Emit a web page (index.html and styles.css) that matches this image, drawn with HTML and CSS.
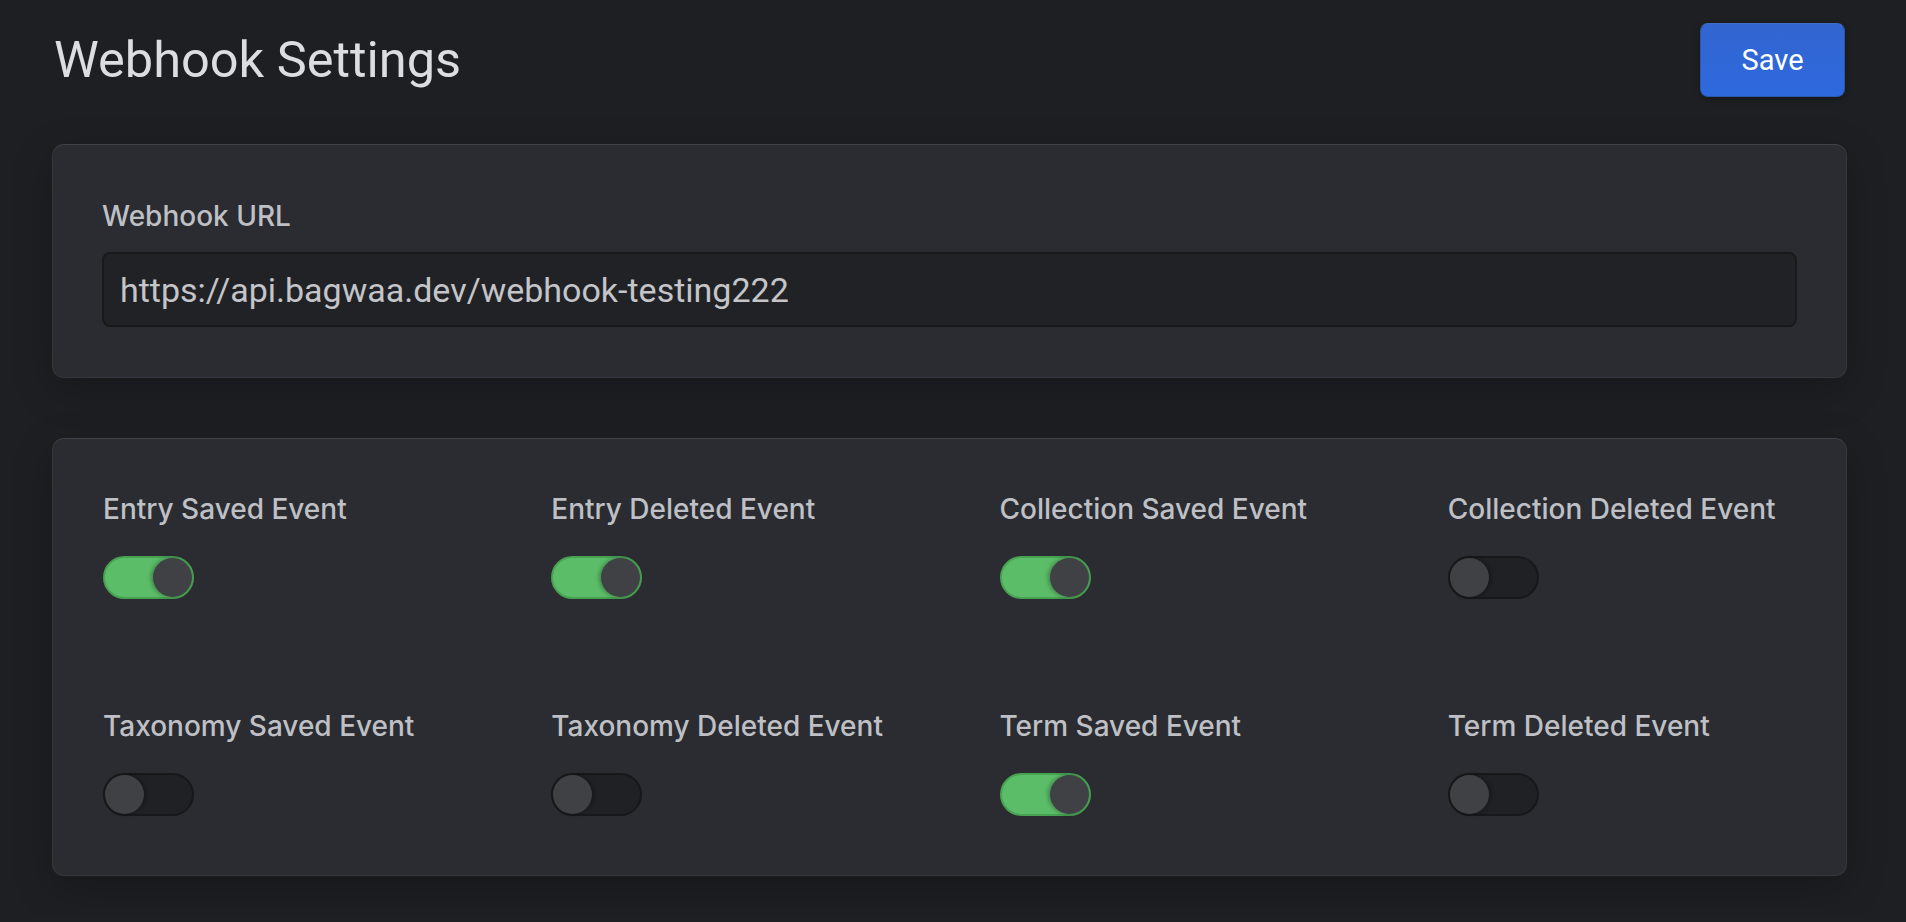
FILE: index.html
```html
<!DOCTYPE html>
<html lang="en">
<head>
<meta charset="utf-8">
<title>Webhook Settings</title>
<link rel="stylesheet" href="styles.css">
</head>
<body>
<div class="page">
  <header class="header">
    <h1 class="title">Webhook Settings</h1>
    <button class="save-btn" type="button">Save</button>
  </header>

  <section class="card card-url">
    <label class="label url-label" for="url">Webhook URL</label>
    <input class="url-input" id="url" type="text" value="https://api.bagwaa.dev/webhook-testing222" readonly>
  </section>

  <section class="card card-events">
    <div class="event">
      <div class="label">Entry Saved Event</div>
      <div class="toggle on"><span class="knob"></span></div>
    </div>
    <div class="event">
      <div class="label">Entry Deleted Event</div>
      <div class="toggle on"><span class="knob"></span></div>
    </div>
    <div class="event">
      <div class="label">Collection Saved Event</div>
      <div class="toggle on"><span class="knob"></span></div>
    </div>
    <div class="event">
      <div class="label">Collection Deleted Event</div>
      <div class="toggle"><span class="knob"></span></div>
    </div>
    <div class="event">
      <div class="label">Taxonomy Saved Event</div>
      <div class="toggle"><span class="knob"></span></div>
    </div>
    <div class="event">
      <div class="label">Taxonomy Deleted Event</div>
      <div class="toggle"><span class="knob"></span></div>
    </div>
    <div class="event">
      <div class="label">Term Saved Event</div>
      <div class="toggle on"><span class="knob"></span></div>
    </div>
    <div class="event">
      <div class="label">Term Deleted Event</div>
      <div class="toggle"><span class="knob"></span></div>
    </div>
  </section>
</div>
</body>
</html>
```

FILE: styles.css
```css
* {
  box-sizing: border-box;
}

html, body {
  margin: 0;
  padding: 0;
  background: #1e1f22;
}

body {
  font-family: Roboto, "Liberation Sans", Arial, sans-serif;
  color: #dcdde0;
}

.page {
  padding: 23px 59px 40px 52px;
}

.header {
  display: flex;
  justify-content: space-between;
  align-items: center;
  margin-bottom: 47px;
}

.title {
  margin: 0 0 0 2px;
  font-family: Roboto, "Liberation Sans", Arial, sans-serif;
  font-size: 50.5px;
  font-weight: 400;
  line-height: 1;
  color: #dcdde0;
}

.save-btn {
  width: 145px;
  height: 74px;
  margin-right: 2px;
  border: 1px solid #2b57ad;
  border-top-color: #3f6fc4;
  border-radius: 8px;
  background: linear-gradient(#3265cf, #2e69df);
  color: #ffffff;
  font-family: Roboto, "Liberation Sans", Arial, sans-serif;
  font-size: 29px;
  font-weight: 400;
  box-shadow: 0 2px 6px rgba(0, 0, 0, 0.3);
  cursor: pointer;
}

.card {
  background: #2b2c31;
  border: 1px solid #36373c;
  border-top-color: #414247;
  border-radius: 12px;
  box-shadow: 0 12px 40px rgba(0, 0, 0, 0.22);
}

.card-url {
  display: flex;
  flex-direction: column;
  padding: 54px 49px 50px 49px;
  margin-bottom: 60px;
}

.label {
  font-family: Inter, "Noto Sans", sans-serif;
  font-size: 28px;
  font-weight: 500;
  color: #bfc0c5;
  line-height: normal;
}

.url-label {
  margin-bottom: 19px;
}

.url-input {
  display: block;
  width: 100%;
  height: 75px;
  padding: 0 16px;
  background: #212225;
  border: 2px solid #18191b;
  border-radius: 8px;
  color: #c4c5c9;
  font-family: Roboto, "Liberation Sans", Arial, sans-serif;
  font-size: 34px;
  outline: none;
}

.card-events {
  display: grid;
  grid-template-columns: repeat(4, 1fr);
  row-gap: 110px;
  padding: 53px 0 59px 0;
}

.event {
  padding-left: 50px;
  display: flex;
  flex-direction: column;
  align-items: flex-start;
}

.event .label {
  margin-bottom: 30px;
}

.toggle {
  width: 91px;
  height: 43px;
  border-radius: 22px;
  border: 2px solid #17181a;
  background: #202124;
  display: flex;
  justify-content: flex-start;
  align-items: center;
}

.toggle.on {
  background: #5cbd68;
  border-color: #47a251;
  justify-content: flex-end;
}

.knob {
  width: 39px;
  height: 39px;
  border-radius: 50%;
  background: #404145;
  box-shadow: 2px 0 4px rgba(0, 0, 0, 0.3);
}

.toggle.on .knob {
  box-shadow: -2px 0 4px rgba(0, 0, 0, 0.3);
}
```
